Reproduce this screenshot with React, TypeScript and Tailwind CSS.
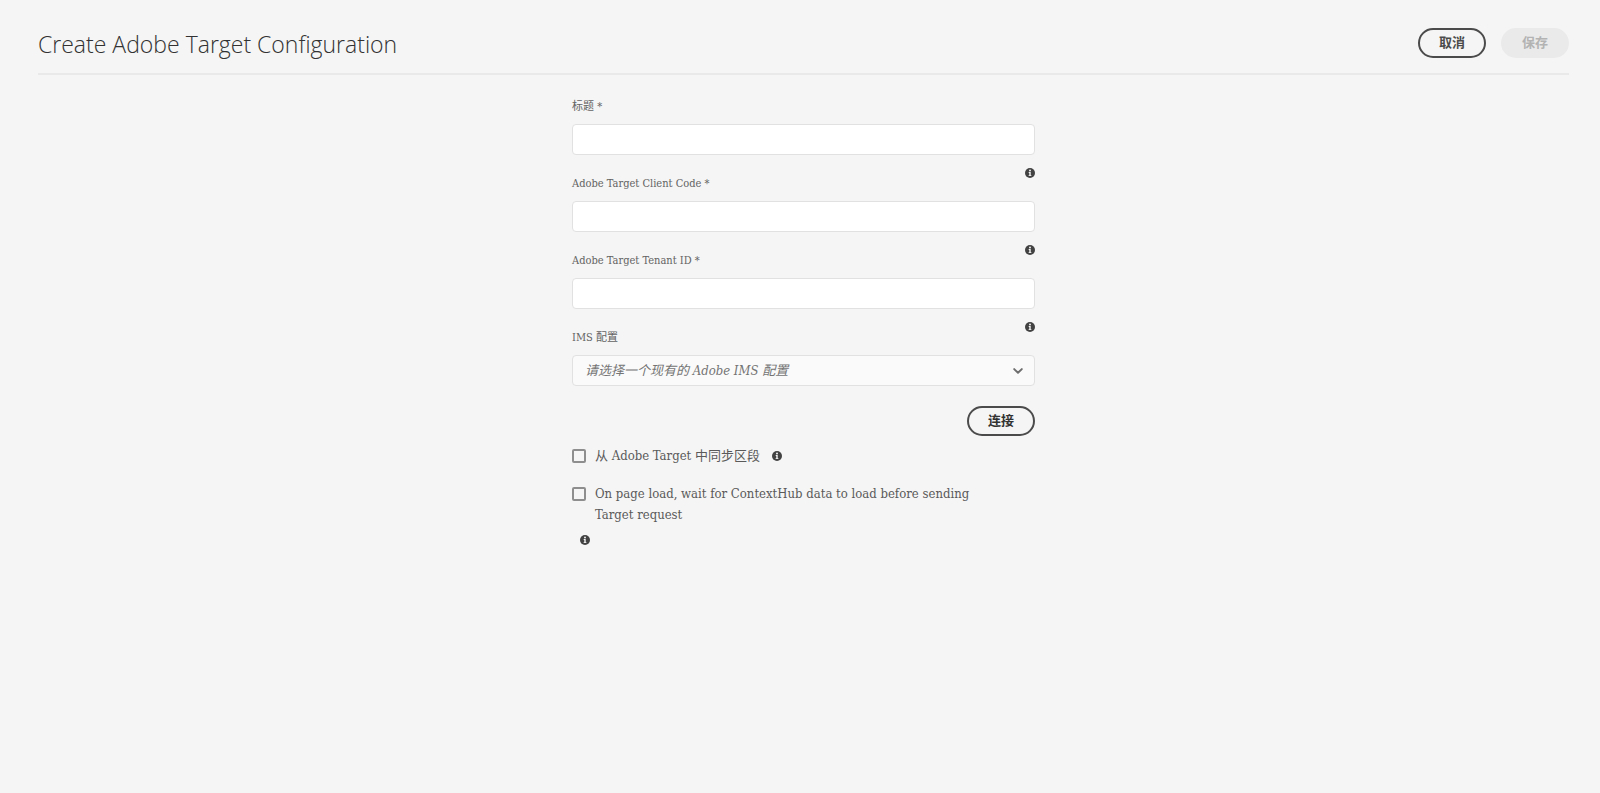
import { useId } from "react";
import type { ReactNode } from "react";

function InfoIcon() {
  return (
    <svg viewBox="0 0 10 10" className="block size-[10px] shrink-0" role="img" aria-label="信息">
      <circle cx="5" cy="5" r="5" fill="#424242" />
      <circle cx="5" cy="2.5" r="0.95" fill="#f5f5f5" />
      <path d="M3.7 4.1h2v3.1h0.7v0.9H3.6v-0.9h0.7V5H3.7z" fill="#f5f5f5" />
    </svg>
  );
}

function Field({ label, info, children }: { label: string; info?: boolean; children: (id: string) => ReactNode }) {
  const id = useId();
  return (
    <div className="h-[77px]">
      <div className="flex h-[33px] items-start justify-between">
        <label
          htmlFor={id}
          className="pt-2 font-['DejaVu_Serif_Condensed','DejaVu_Serif','Noto_Sans_CJK_SC',serif] text-[11px] leading-[16px] text-[#636363]"
        >
          {label}
        </label>
        {info && <InfoIcon />}
      </div>
      {children(id)}
    </div>
  );
}

function TextField({ label, info }: { label: string; info?: boolean }) {
  return (
    <Field label={label} info={info}>
      {(id) => (
        <input
          id={id}
          type="text"
          required
          className="block h-[31px] w-full rounded-[4px] border border-[#e1e1e1] bg-white px-3 text-[13px] text-[#4b4b4b] outline-none"
        />
      )}
    </Field>
  );
}

function Check({ children }: { children: ReactNode }) {
  return (
    <label className="flex gap-[9px] font-['DejaVu_Serif_Condensed','DejaVu_Serif','Noto_Sans_CJK_SC',serif] text-[13px] leading-[21px] text-[#5a5a5a]">
      <input
        type="checkbox"
        className="mt-[4px] size-[14px] shrink-0 appearance-none rounded-[2px] border-2 border-[#8e8e8e] bg-[#f5f5f5] checked:bg-[#8e8e8e]"
      />
      <span>{children}</span>
    </label>
  );
}

const pill =
  "flex h-[30px] w-[68px] items-center justify-center rounded-full border-2 pb-[2px] font-['Noto_Sans_CJK_SC',sans-serif] text-[13px] leading-[20px] font-bold";

export default function App() {
  return (
    <div className="min-h-screen bg-[#f5f5f5] pr-[31px] pl-[38px] font-['Open_Sans','Noto_Sans_CJK_SC',sans-serif]">
      <header className="flex items-start justify-between border-b-2 border-[#e9e9e9] pt-[28px] pb-[13px]">
        <h1 className="text-[23px] leading-[32px] font-light text-[#323232]">Create Adobe Target Configuration</h1>
        <div className="flex gap-[15px]">
          <button type="button" className={`${pill} border-[#4b4b4b] text-[#4b4b4b]`}>
            取消
          </button>
          <button type="button" disabled className={`${pill} border-[#eaeaea] bg-[#eaeaea] text-[#b3b3b3]`}>
            保存
          </button>
        </div>
      </header>

      <form className="mx-auto max-w-[463px] pt-[16px]">
        <TextField label="标题 *" />
        <TextField label="Adobe Target Client Code *" info />
        <TextField label="Adobe Target Tenant ID *" info />
        <Field label="IMS 配置" info>
          {(id) => (
            <div className="relative">
              <select
                id={id}
                defaultValue=""
                className="block h-[31px] w-full appearance-none rounded-[4px] border border-[#e1e1e1] bg-[#fafafa] pr-8 pl-3 font-['DejaVu_Serif_Condensed','DejaVu_Serif','Noto_Sans_CJK_SC',serif] text-[13px] text-[#747474] italic outline-none"
              >
                <option value="">请选择一个现有的 Adobe IMS 配置</option>
              </select>
              <svg viewBox="0 0 10 6" className="pointer-events-none absolute top-[13px] right-[12px] h-[6px] w-[10px]" aria-hidden="true">
                <path d="M1.2 1.1 5 4.8 8.8 1.1" fill="none" stroke="#6e6e6e" strokeWidth="2" strokeLinecap="round" strokeLinejoin="round" />
              </svg>
            </div>
          )}
        </Field>

        <div className="flex justify-end pt-[7px]">
          <button type="button" className={`${pill} border-[#4b4b4b] text-[#323232]`}>
            连接
          </button>
        </div>

        <div className="flex items-center gap-3 pt-[9px]">
          <Check>从 Adobe Target 中同步区段</Check>
          <InfoIcon />
        </div>
        <div className="pt-[17px]">
          <div className="pr-8">
            <Check>On page load, wait for ContextHub data to load before sending Target request</Check>
          </div>
          <div className="px-2 pt-[10px]">
            <InfoIcon />
          </div>
        </div>
      </form>
    </div>
  );
}
